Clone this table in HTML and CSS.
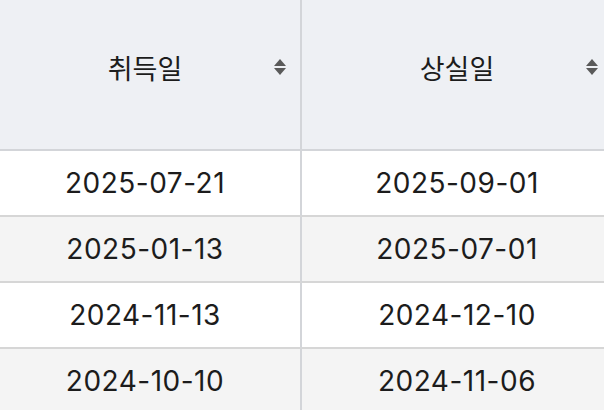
FILE: index.html
```html
<!DOCTYPE html>
<html lang="ko">
<head>
<meta charset="utf-8">
<link rel="stylesheet" href="styles.css">
</head>
<body>
<div class="viewport">
  <table class="grid">
    <thead>
      <tr>
        <th><div class="th-inner"><span class="th-label">취득일</span><span class="sort"><span class="up"></span><span class="down"></span></span></div></th>
        <th><div class="th-inner"><span class="th-label">상실일</span><span class="sort"><span class="up"></span><span class="down"></span></span></div></th>
      </tr>
    </thead>
    <tbody>
      <tr><td>2025-07-21</td><td>2025-09-01</td></tr>
      <tr class="alt"><td>2025-01-13</td><td>2025-07-01</td></tr>
      <tr><td>2024-11-13</td><td>2024-12-10</td></tr>
      <tr class="alt"><td>2024-10-10</td><td>2024-11-06</td></tr>
    </tbody>
  </table>
</div>
</body>
</html>
```

FILE: styles.css
```css
html, body {
  margin: 0;
  padding: 0;
  background: #ffffff;
}
.viewport {
  width: 604px;
  height: 410px;
  overflow: hidden;
}
.grid {
  margin-left: -10px;
  border-collapse: separate;
  border-spacing: 0;
  table-layout: fixed;
  width: 620px;
  font-family: Inter, "Noto Sans CJK KR", sans-serif;
  color: #1c1c1c;
}
.grid th {
  width: 310px;
  height: 149px;
  padding: 0;
  background: #eef0f4;
  border-bottom: 2px solid #d3d5d9;
  font-weight: 400;
  vertical-align: middle;
}
.grid th:first-child {
  border-right: 2px solid #d3d5d9;
}
.th-inner {
  position: relative;
  display: flex;
  align-items: center;
  justify-content: center;
  padding-bottom: 14px;
}
.th-label {
  font-family: "Noto Sans CJK KR", sans-serif;
  font-size: 27px;
  font-weight: 400;
  color: #1c1c1c;
}
.sort {
  position: absolute;
  right: 14px;
  top: 50%;
  margin-top: -16px;
  display: flex;
  flex-direction: column;
  gap: 2px;
}
.sort .up {
  width: 0;
  height: 0;
  border-left: 6px solid transparent;
  border-right: 6px solid transparent;
  border-bottom: 7px solid #5a5a5a;
}
.sort .down {
  width: 0;
  height: 0;
  border-left: 6px solid transparent;
  border-right: 6px solid transparent;
  border-top: 7px solid #5a5a5a;
}
.grid td {
  height: 64px;
  padding: 0;
  text-align: center;
  vertical-align: middle;
  font-size: 28px;
  letter-spacing: 0.5px;
  border-bottom: 2px solid #d6d6d6;
  background: #ffffff;
}
.grid td:first-child {
  border-right: 2px solid #d3d5d9;
}
.grid tr.alt td {
  background: #f4f4f4;
}
```
